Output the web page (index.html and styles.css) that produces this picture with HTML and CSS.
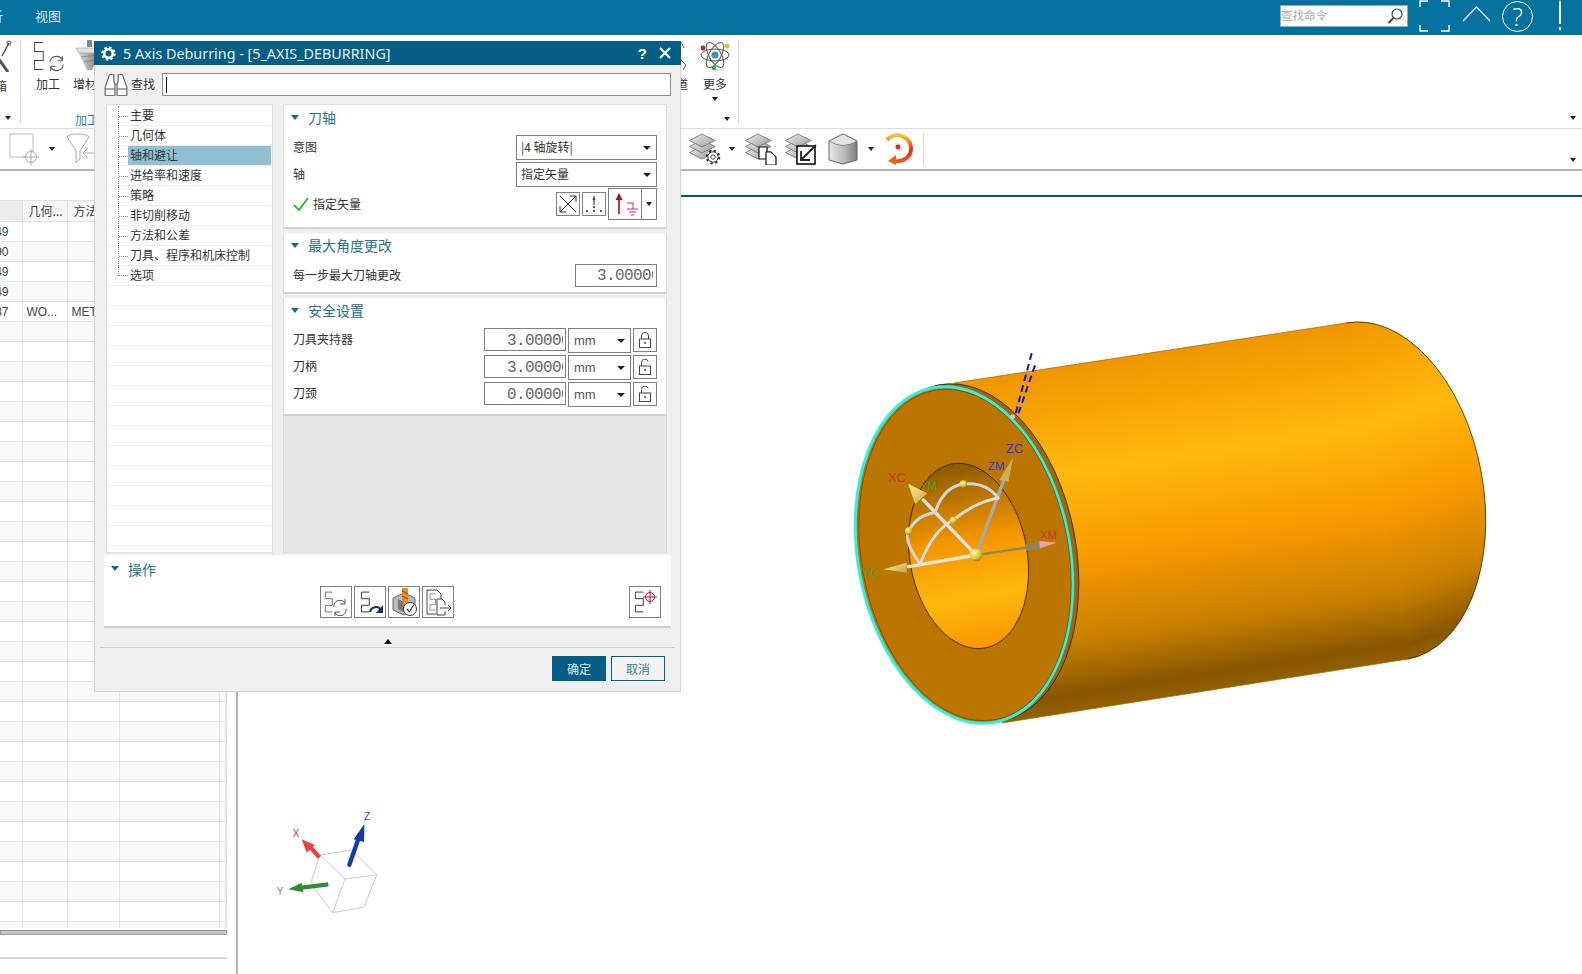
FILE: index.html
```html
<!DOCTYPE html>
<html lang="zh-CN">
<head>
<meta charset="utf-8">
<title>5 Axis Deburring</title>
<link rel="stylesheet" href="styles.css">
</head>
<body>
<svg class="defs" width="0" height="0" aria-hidden="true">
  <defs>
    <linearGradient id="layerFill" x1="0" y1="0" x2="1" y2="1"><stop offset="0" stop-color="#f2f2f2"/><stop offset="1" stop-color="#9a9a9a"/></linearGradient>
    <linearGradient id="cylFill" x1="0" y1="0" x2="1" y2="0"><stop offset="0" stop-color="#e8e8e8"/><stop offset=".5" stop-color="#bdbdbd"/><stop offset="1" stop-color="#7d7d7d"/></linearGradient>
    <linearGradient id="spinFill" x1="0" y1="0" x2="0" y2="1"><stop offset="0" stop-color="#f5c52a"/><stop offset=".55" stop-color="#e2301e"/><stop offset="1" stop-color="#e85a1c"/></linearGradient>
    <linearGradient id="drillFill" x1="0" y1="0" x2="1" y2="0"><stop offset="0" stop-color="#e6e6e6"/><stop offset=".6" stop-color="#9c9c9c"/><stop offset="1" stop-color="#777"/></linearGradient>
    <symbol id="meander" viewBox="0 0 14 30" preserveAspectRatio="none"><path d="M13 1.5H2V10.5H13V19.5H2V28.5H13" fill="none" stroke="currentColor" stroke-width="1.2"/></symbol>
    <symbol id="layers" viewBox="0 0 32 32">
      <path d="M13 13 26 19.5 13 26 0.5 19.5Z" fill="url(#layerFill)" stroke="#666" stroke-width=".8"/>
      <path d="M13 7 26 13.5 13 20 0.5 13.5Z" fill="url(#layerFill)" stroke="#666" stroke-width=".8"/>
      <path d="M13 1 26 7.5 13 14 0.5 7.5Z" fill="url(#layerFill)" stroke="#666" stroke-width=".8"/>
    </symbol>
    <symbol id="lock-closed" viewBox="0 0 16 18"><path d="M4.5 8V5a3.5 3.5 0 0 1 7 0V8" fill="none" stroke="#444"/><rect x="2.5" y="8" width="11" height="8.5" fill="#fff" stroke="#444"/><circle cx="8" cy="12" r="1" fill="#444"/></symbol>
    <symbol id="lock-open" viewBox="0 0 16 18"><path d="M4.5 8V4.5a3.5 3.5 0 0 1 6.8-1" fill="none" stroke="#444"/><rect x="2.5" y="8" width="11" height="8.5" fill="#fff" stroke="#444"/><circle cx="8" cy="12" r="1" fill="#444"/></symbol>
  </defs>
</svg>

<div class="app">
  <header class="topbar">
    <span class="menu menu-clipped">析</span>
    <span class="menu">视图</span>
    <div class="top-right">
      <div class="cmd-search">
        <span class="cmd-hint">查找命令</span>
        <svg class="cmd-glass" viewBox="0 0 18 18" width="18" height="18"><circle cx="11" cy="7" r="5" fill="none" stroke="#444" stroke-width="1.2"/><path d="M7.5 11 2.5 16" stroke="#444" stroke-width="2"/></svg>
      </div>
      <svg class="win-frame" viewBox="0 0 31 32" width="31" height="32"><path d="M1 7V1H9M22 1H30V7M1 25V31H9M22 31H30V25" fill="none" stroke="#fff" stroke-width="1.4"/></svg>
      <svg class="win-up" viewBox="0 0 29 16" width="29" height="16"><path d="M1 15 14.5 1 28 15" fill="none" stroke="#fff" stroke-width="1.2"/></svg>
      <div class="win-help">?</div>
      <div class="win-bang"><span class="bang-bar"></span><span class="bang-dot"></span></div>
    </div>
  </header>

  <section class="ribbon">
    <div class="rb-clip">
      <div class="rb-clip-icon">
        <svg viewBox="0 0 12 32" width="12" height="32"><path d="M-2 18 8 32" stroke="#555" stroke-width="3" fill="none"/><path d="M2 16 9 3" stroke="#555" stroke-width="1.5" fill="none"/><circle cx="9" cy="3" r="2" fill="none" stroke="#555"/></svg>
      </div>
      <span class="rb-clip-text">箱</span>
      <span class="caret caret-clip"></span>
    </div>
    <div class="rb-group">
      <div class="rb-tools">
        <div class="tool tool-mill">
          <div class="tool-icon">
            <svg class="ink" width="11" height="30"><use href="#meander" width="11" height="30"/></svg>
            <svg class="spin" viewBox="0 0 20 20" width="19" height="19"><path d="M3 9A7 7 0 0 1 16 6M17 11A7 7 0 0 1 4 14" fill="none" stroke="#555" stroke-width="1.1"/><path d="M16 2V7H11M4 18V13H9" fill="none" stroke="#555" stroke-width="1.1"/></svg>
          </div>
          <span class="tool-label">加工</span>
        </div>
        <div class="tool tool-add">
          <div class="tool-icon">
            <svg class="drill" viewBox="0 0 30 32" width="30" height="32"><rect x="12" y="0" width="5" height="7" fill="#888"/><path d="M1 8H28L17 30H12Z" fill="url(#drillFill)"/><path d="M1 8H28L25 13H4Z" fill="#e4e4e4" stroke="#999" stroke-width=".6"/><path d="M6 17 23 15M9 22 20 20" stroke="#777" stroke-width=".7"/></svg>
          </div>
          <span class="tool-label">增材</span>
        </div>
        <div class="tool tool-road">
          <div class="tool-icon">
            <svg viewBox="0 0 8 32" width="8" height="32"><path d="M1 2 4 8M1 20 6 25 3 30" fill="none" stroke="#555"/></svg>
          </div>
          <span class="tool-label">道</span>
        </div>
        <div class="tool tool-more">
          <div class="tool-icon">
            <svg viewBox="0 0 30 32" width="30" height="32">
              <g fill="none" stroke="#555" stroke-width="1"><ellipse cx="15" cy="15" rx="14" ry="6"/><ellipse cx="15" cy="15" rx="14" ry="6" transform="rotate(60 15 15)"/><ellipse cx="15" cy="15" rx="14" ry="6" transform="rotate(120 15 15)"/></g>
              <circle cx="15" cy="15" r="3.6" fill="#3e93b5"/>
              <circle cx="3" cy="8" r="2.4" fill="#b4262c"/><circle cx="27" cy="6" r="2.4" fill="#efb02a"/><circle cx="14" cy="28" r="2.4" fill="#2fae4a"/>
            </svg>
          </div>
          <span class="tool-label">更多</span>
          <span class="caret caret-more"></span>
        </div>
      </div>
      <div class="rb-foot"><span class="rb-name">加工</span><span class="caret"></span></div>
    </div>
    <div class="rb-end"><span class="caret"></span></div>
  </section>

  <section class="toolbar">
    <div class="tb-left">
      <svg class="tb-select" viewBox="0 0 32 32" width="32" height="32"><rect x="1" y="1" width="23" height="23" fill="#fff" stroke="#bbb"/><circle cx="22" cy="24" r="5.5" fill="#fff" stroke="#aaa"/><path d="M22 16V32M14 24H30" stroke="#aaa"/></svg>
      <span class="caret caret-select"></span>
      <svg class="tb-funnel" viewBox="0 0 30 32" width="30" height="32"><ellipse cx="12" cy="4" rx="11" ry="3" fill="#fff" stroke="#aaa"/><path d="M1 4 10 18V30L14 26V18L23 4" fill="#fff" stroke="#aaa"/><path d="M30 20H17M22 15 17 20 22 25" fill="none" stroke="#aaa"/></svg>
    </div>
    <svg class="tb-a" viewBox="0 0 32 32" width="32" height="32"><use href="#layers" width="32" height="32"/><circle cx="24" cy="24" r="6" fill="#fff" stroke="#333" stroke-width="2.6" stroke-dasharray="2.2 2.5"/><circle cx="24" cy="24" r="5.2" fill="#fff" stroke="#333" stroke-width=".9"/><circle cx="24" cy="24" r="2.2" fill="#fff" stroke="#333" stroke-width=".9"/></svg>
    <span class="caret caret-a"></span>
    <svg class="tb-b" viewBox="0 0 32 32" width="32" height="32"><use href="#layers" width="32" height="32"/><path d="M14 14H22V26H14Z" fill="#fff" stroke="#111" stroke-width="1.2"/><path d="M21 19H26L31 24V32H21Z" fill="#fff" stroke="#111" stroke-width="1.2"/></svg>
    <svg class="tb-c" viewBox="0 0 32 32" width="32" height="32"><use href="#layers" width="32" height="32"/><rect x="12" y="13" width="18" height="18" fill="#fff" stroke="#111" stroke-width="1.6"/><path d="M16 18V27H25M17 26 31 12" fill="none" stroke="#222" stroke-width="1.8"/></svg>
    <svg class="tb-d" viewBox="0 0 30 32" width="30" height="32"><path d="M15 1 29 8V27L15 31 1 27V8Z" fill="url(#cylFill)" stroke="#666"/><path d="M1 8Q15 17 29 8L15 1Z" fill="#e2e2e2" stroke="#777" stroke-width=".8"/></svg>
    <span class="caret caret-d"></span>
    <svg class="tb-e" viewBox="0 0 28 32" width="28" height="32"><path d="M2 7C8 -1 24 1 26 14 27 24 18 29 10 28" fill="none" stroke="url(#spinFill)" stroke-width="3.8"/><path d="M11 22 3 28 11 32Z" fill="#e8661c"/><circle cx="13" cy="14" r="2.4" fill="#d01818"/><path d="M9 14H17M13 10V18" stroke="#e06060" stroke-width=".6"/></svg>
    <span class="tb-sep"></span>
    <span class="caret caret-end"></span>
  </section>

  <main class="workspace">
    <aside class="navigator">
      <div class="grid-wrap">
        <table class="grid">
          <thead><tr><th></th><th>几何...</th><th>方法</th><th></th><th></th></tr></thead>
          <tbody>
            <tr><td>49</td><td></td><td></td><td></td><td></td></tr>
            <tr><td>90</td><td></td><td></td><td></td><td></td></tr>
            <tr><td>49</td><td></td><td></td><td></td><td></td></tr>
            <tr><td>49</td><td></td><td></td><td></td><td></td></tr>
            <tr><td>37</td><td>WO...</td><td>MET</td><td></td><td></td></tr>
            <tr><td></td><td></td><td></td><td></td><td></td></tr>
            <tr><td></td><td></td><td></td><td></td><td></td></tr>
            <tr><td></td><td></td><td></td><td></td><td></td></tr>
            <tr><td></td><td></td><td></td><td></td><td></td></tr>
            <tr><td></td><td></td><td></td><td></td><td></td></tr>
            <tr><td></td><td></td><td></td><td></td><td></td></tr>
            <tr><td></td><td></td><td></td><td></td><td></td></tr>
            <tr><td></td><td></td><td></td><td></td><td></td></tr>
            <tr><td></td><td></td><td></td><td></td><td></td></tr>
            <tr><td></td><td></td><td></td><td></td><td></td></tr>
            <tr><td></td><td></td><td></td><td></td><td></td></tr>
            <tr><td></td><td></td><td></td><td></td><td></td></tr>
            <tr><td></td><td></td><td></td><td></td><td></td></tr>
            <tr><td></td><td></td><td></td><td></td><td></td></tr>
            <tr><td></td><td></td><td></td><td></td><td></td></tr>
            <tr><td></td><td></td><td></td><td></td><td></td></tr>
            <tr><td></td><td></td><td></td><td></td><td></td></tr>
            <tr><td></td><td></td><td></td><td></td><td></td></tr>
            <tr><td></td><td></td><td></td><td></td><td></td></tr>
            <tr><td></td><td></td><td></td><td></td><td></td></tr>
            <tr><td></td><td></td><td></td><td></td><td></td></tr>
            <tr><td></td><td></td><td></td><td></td><td></td></tr>
            <tr><td></td><td></td><td></td><td></td><td></td></tr>
            <tr><td></td><td></td><td></td><td></td><td></td></tr>
            <tr><td></td><td></td><td></td><td></td><td></td></tr>
            <tr><td></td><td></td><td></td><td></td><td></td></tr>
            <tr><td></td><td></td><td></td><td></td><td></td></tr>
            <tr><td></td><td></td><td></td><td></td><td></td></tr>
            <tr><td></td><td></td><td></td><td></td><td></td></tr>
            <tr><td></td><td></td><td></td><td></td><td></td></tr>
            <tr><td></td><td></td><td></td><td></td><td></td></tr>
          </tbody>
        </table>
      </div>
      <div class="nav-scroll"></div>
      <div class="nav-rule"></div>
    </aside>
    <div class="divider"></div>
    <div class="graphics">
      <svg class="scene" viewBox="238 197 1344 777" width="1344" height="777">
        <defs>
          <linearGradient id="bodyFill" gradientUnits="userSpaceOnUse" x1="954" y1="383" x2="1006" y2="722">
            <stop offset="0" stop-color="#f09600"/><stop offset=".31" stop-color="#ffb90d"/><stop offset=".57" stop-color="#f89800"/><stop offset=".8" stop-color="#c87f00"/><stop offset=".95" stop-color="#875600"/><stop offset="1" stop-color="#936000"/>
          </linearGradient>
          <linearGradient id="holeFill" x1="0" y1="0" x2="0" y2="1">
            <stop offset="0" stop-color="#8a5800"/><stop offset=".18" stop-color="#b87400"/><stop offset=".42" stop-color="#f59600"/><stop offset=".72" stop-color="#ffb80c"/><stop offset="1" stop-color="#f79800"/>
          </linearGradient>
          <linearGradient id="coneFill" x1="0" y1="0" x2="1" y2="1"><stop offset="0" stop-color="#fff3a0"/><stop offset="1" stop-color="#c9a33a"/></linearGradient>
          <radialGradient id="ballFill" cx=".35" cy=".3" r=".8"><stop offset="0" stop-color="#fff6a8"/><stop offset=".6" stop-color="#e3c337"/><stop offset="1" stop-color="#8d7612"/></radialGradient>
        </defs>
        <ellipse cx="1377" cy="491" rx="106" ry="171" transform="rotate(-10.5 1377 491)" fill="url(#bodyFill)"/>
        <polygon points="954,383 1346,323 1408,659 1002,723 970,600" fill="url(#bodyFill)"/>
        <path d="M1346 323A105.4 170 -10.5 0 1 1408 659" fill="none" stroke="#3a2800" stroke-width=".8"/>
        <path d="M954 383 1346 323M1002 723 1408 659" stroke="#a86d00" stroke-width=".8"/>
        <ellipse cx="970" cy="553" rx="106" ry="171" transform="rotate(-10.5 970 553)" fill="#a06800" stroke="#222" stroke-width=".8"/>
        <ellipse cx="964" cy="555" rx="106" ry="170" transform="rotate(-10.5 964 555)" fill="#bb7600" stroke="#2df0e6" stroke-width="3"/>
        <ellipse cx="965" cy="555" rx="103.5" ry="167.5" transform="rotate(-10.5 965 555)" fill="none" stroke="#5e3c00" stroke-width=".6"/>
        <ellipse cx="968.5" cy="556" rx="58.7" ry="93.5" transform="rotate(-10 968.5 556)" fill="url(#holeFill)" stroke="#2a1b00" stroke-width=".8"/>
        <g transform="translate(840 340) scale(.33333)">
          <g fill="none" stroke="#1212cf" stroke-width="6" stroke-dasharray="20 13">
            <path d="M575 40 525 228"/><path d="M585 76 532 230"/>
          </g>
          <circle cx="518" cy="230" r="7" fill="#f3c4b0"/>
          <g fill="none" stroke-linecap="round">
            <path d="M408 645 565 622" stroke="#8f8566" stroke-width="7"/>
            <path d="M408 645 205 680" stroke="#e8e4da" stroke-width="10"/>
            <path d="M408 645 490 425" stroke="#a9a9a9" stroke-width="10"/>
            <path d="M408 645 250 480" stroke="#e6e6e6" stroke-width="10"/>
            <path d="M240 672Q190 600 206 573 230 525 285 518" stroke="#d5d5d5" stroke-width="9"/>
            <path d="M285 518Q310 440 370 432 440 425 475 475" stroke="#d5d5d5" stroke-width="9"/>
            <path d="M240 672Q280 570 340 540 400 490 470 475" stroke="#dddddd" stroke-width="9"/>
          </g>
          <polygon points="558,612 606,603 606,625 558,633" fill="#8c8460"/>
          <polygon points="650,608 598,603 600,625" fill="#f0a0a8"/>
          <polygon points="130,688 200,668 200,698" fill="url(#coneFill)"/>
          <polygon points="520,352 478,420 505,425" fill="#c9b15c"/>
          <polygon points="205,432 225,492 262,460" fill="url(#coneFill)"/>
          <circle cx="408" cy="645" r="19" fill="url(#ballFill)"/>
          <circle cx="370" cy="432" r="11" fill="url(#ballFill)"/>
          <circle cx="340" cy="541" r="11" fill="url(#ballFill)"/>
          <circle cx="206" cy="573" r="11" fill="url(#ballFill)"/>
          <text class="g-lab g-red" x="143" y="425">XC</text>
          <text class="g-lab g-blue" x="497" y="339">ZC</text>
          <text class="g-lab g-sm g-blue" x="444" y="389">ZM</text>
          <text class="g-lab g-sm g-green" x="240" y="450">YM</text>
          <text class="g-lab g-green" x="65" y="711">YC</text>
          <text class="g-lab g-sm g-red" x="600" y="597">XM</text>
        </g>
        <g transform="translate(0 780) scale(.33333)">
          <path d="M960 225 1055 210 1130 285 1035 297ZM1035 297 998 398 1092 382 1130 285M998 398 932 310 960 225" fill="#fff" stroke="#bdbdbd" stroke-width="2.4"/>
          <path d="M958 232 930 200" stroke="#e2453d" stroke-width="13"/>
          <polygon points="905,178 945,195 920,218" fill="#e2453d"/>
          <path d="M1048 254 1074 180" stroke="#0b3db3" stroke-width="13" stroke-linecap="round"/>
          <polygon points="1093,132 1061,178 1092,186" fill="#0b3db3"/>
          <path d="M985 313 905 323" stroke="#2f8f2f" stroke-width="13"/>
          <polygon points="865,328 905,308 910,337" fill="#2f8f2f"/>
          <text class="t-lab g-red" x="878" y="172">X</text>
          <text class="t-lab g-blue" x="1092" y="120">Z</text>
          <text class="t-lab g-green" x="830" y="344">Y</text>
        </g>
      </svg>
    </div>
  </main>

  <div class="dialog">
    <div class="dlg-title">
      <svg class="dlg-gear" viewBox="0 0 16 16" width="15" height="15"><circle cx="8" cy="8" r="4.6" fill="none" stroke="#fff" stroke-width="2.8"/><circle cx="8" cy="8" r="6.4" fill="none" stroke="#fff" stroke-width="2.4" stroke-dasharray="2.6 2.4"/></svg>
      <span class="dlg-name">5 Axis Deburring - [5_AXIS_DEBURRING]</span>
      <span class="dlg-q">?</span>
      <svg class="dlg-x" viewBox="0 0 12 12" width="12" height="12"><path d="M1 1 11 11M11 1 1 11" stroke="#fff" stroke-width="2"/></svg>
    </div>
    <div class="dlg-search">
      <svg class="binoc" viewBox="0 0 24 30" width="26" height="24" preserveAspectRatio="none"><path d="M6 2H10V10L11 14V28H2V18ZM18 2H14V10L13 14V28H22V18Z" fill="#fff" stroke="#555"/><path d="M2 20H11M13 20H22M11 14H13" stroke="#555"/></svg>
      <span class="find-label">查找</span>
      <div class="find-input"><span class="find-cursor"></span></div>
    </div>
    <div class="dlg-body">
      <ul class="tree">
        <li class="node"><span class="branch"></span><span class="node-text">主要</span></li>
        <li class="node"><span class="branch"></span><span class="node-text">几何体</span></li>
        <li class="node"><span class="branch"></span><span class="node-text node-on">轴和避让</span></li>
        <li class="node"><span class="branch"></span><span class="node-text">进给率和速度</span></li>
        <li class="node"><span class="branch"></span><span class="node-text">策略</span></li>
        <li class="node"><span class="branch"></span><span class="node-text">非切削移动</span></li>
        <li class="node"><span class="branch"></span><span class="node-text">方法和公差</span></li>
        <li class="node"><span class="branch"></span><span class="node-text">刀具、程序和机床控制</span></li>
        <li class="node node-last"><span class="branch"></span><span class="node-text">选项</span></li>
        <li class="node"></li><li class="node"></li><li class="node"></li><li class="node"></li><li class="node"></li>
        <li class="node"></li><li class="node"></li><li class="node"></li><li class="node"></li><li class="node"></li>
        <li class="node"></li><li class="node"></li><li class="node"></li>
      </ul>
      <div class="pages">
        <section class="panel panel-axis">
          <h3 class="sec"><span class="tri"></span>刀轴</h3>
          <div class="row row-sel row-first">
            <span class="lab">意图</span>
            <div class="select sel-wide"><span>|4 轴旋转|</span><span class="drop"></span></div>
          </div>
          <div class="row row-sel">
            <span class="lab">轴</span>
            <div class="select sel-wide"><span>指定矢量</span><span class="drop"></span></div>
          </div>
          <div class="row row-vec">
            <svg class="tick" viewBox="0 0 16 16" width="16" height="16"><path d="M1 9 6 14 15 2" fill="none" stroke="#2dbb3d" stroke-width="2"/></svg>
            <span class="lab">指定矢量</span>
            <div class="vec-tools">
              <div class="ibtn ibtn-sm"><svg viewBox="0 0 22 22" width="22" height="22"><path d="M3 3 19 19M19 3 3 19" stroke="#333"/><path d="M19 3H13M19 3V9M3 19H9M3 19V13" fill="none" stroke="#333"/></svg></div>
              <div class="ibtn ibtn-sm"><svg viewBox="0 0 22 22" width="22" height="22"><path d="M11 5V12" stroke="#444" stroke-width="1.2"/><path d="M11 2 12.5 7H9.5Z" fill="#444"/><path d="M3 18H5M10 18H12M17 18H19M10 14H12" stroke="#222" stroke-width="1.4"/></svg></div>
              <div class="vec-combo">
                <div class="vec-main"><svg viewBox="0 0 30 30" width="30" height="30"><path d="M9 9V25" stroke="#a50d12" stroke-width="1.6"/><path d="M9 4 12.5 11H5.5Z" fill="#b40d12"/><path d="M17 14H23V20M17 20H28M19 23H26M21 26H24" fill="none" stroke="#b520b5"/></svg></div>
                <div class="vec-drop"><span class="caret"></span></div>
              </div>
            </div>
          </div>
        </section>
        <section class="panel panel-angle">
          <h3 class="sec"><span class="tri"></span>最大角度更改</h3>
          <div class="row row-num">
            <span class="lab">每一步最大刀轴更改</span>
            <div class="num num-solo"><span class="num-val">3.00000</span></div>
          </div>
        </section>
        <section class="panel panel-safe">
          <h3 class="sec"><span class="tri"></span>安全设置</h3>
          <div class="row row-safe row-first">
            <span class="lab">刀具夹持器</span>
            <div class="num"><span class="num-val">3.00000</span></div>
            <div class="select sel-unit"><span>mm</span><span class="drop"></span></div>
            <div class="lock"><svg width="16" height="18"><use href="#lock-closed"/></svg></div>
          </div>
          <div class="row row-safe">
            <span class="lab">刀柄</span>
            <div class="num"><span class="num-val">3.00000</span></div>
            <div class="select sel-unit"><span>mm</span><span class="drop"></span></div>
            <div class="lock"><svg width="16" height="18"><use href="#lock-open"/></svg></div>
          </div>
          <div class="row row-safe">
            <span class="lab">刀颈</span>
            <div class="num"><span class="num-val">0.00000</span></div>
            <div class="select sel-unit"><span>mm</span><span class="drop"></span></div>
            <div class="lock"><svg width="16" height="18"><use href="#lock-open"/></svg></div>
          </div>
        </section>
        <div class="page-fill"></div>
      </div>
    </div>
    <section class="ops">
      <h3 class="sec sec-ops"><span class="tri"></span>操作</h3>
      <div class="ops-row">
        <div class="ops-mid">
          <div class="ibtn ibtn-op"><svg viewBox="0 0 30 30" width="30" height="30"><svg class="ink-g" x="3" y="4" width="9" height="22"><use href="#meander" width="9" height="22"/></svg><path d="M13 20A6 6 0 0 1 24 16M25 22A6 6 0 0 1 14 26" fill="none" stroke="#555"/><path d="M24 12V17H19M14 29V25H19" fill="none" stroke="#555"/></svg></div>
          <div class="ibtn ibtn-op"><svg viewBox="0 0 30 30" width="30" height="30"><svg class="ink-k" x="5" y="4" width="10" height="22"><use href="#meander" width="10" height="22"/></svg><path d="M15 25A6 6 0 0 1 26 23" fill="none" stroke="#1b2a5c" stroke-width="2"/><path d="M28 18V26H21Z" fill="#1b2a5c"/></svg></div>
          <div class="ibtn ibtn-op"><svg viewBox="0 0 30 30" width="30" height="30"><path d="M4 11 15 6 26 11V23L15 28 4 23Z" fill="#b9b9b9" stroke="#666"/><path d="M9 12 15 15V25L9 22Z" fill="#777"/><path d="M13 1H19V15L16 20 13 15Z" fill="#e98a2b"/><path d="M13 4 19 7M13 9 19 12" stroke="#8a4c10"/><circle cx="21" cy="22" r="6.5" fill="#fff" stroke="#333"/><path d="M18 22 20.5 25 24.5 18" fill="none" stroke="#333" stroke-width="1.2"/></svg></div>
          <div class="ibtn ibtn-op"><svg viewBox="0 0 30 30" width="30" height="30"><path d="M4 3H14L18 7V12M4 3V27H13" fill="none" stroke="#444"/><svg class="ink-g" x="6" y="6" width="7" height="18"><use href="#meander" width="7" height="18"/></svg><path d="M14 12H19L22 15V18M14 12V28H22V24M17 21H28M25 18 28 21 25 24" fill="none" stroke="#444"/></svg></div>
        </div>
        <div class="ibtn ibtn-op"><svg viewBox="0 0 30 30" width="30" height="30"><svg class="ink-k" x="4" y="4" width="10" height="22"><use href="#meander" width="10" height="22"/></svg><circle cx="20" cy="10" r="4.5" fill="none" stroke="#c01020"/><path d="M20 3V17M13 10H27" stroke="#c01020"/></svg></div>
      </div>
    </section>
    <div class="collapse"><span class="collapse-tri"></span></div>
    <div class="dlg-foot">
      <button class="btn btn-ok" type="button">确定</button>
      <button class="btn btn-cancel" type="button">取消</button>
    </div>
  </div>
</div>
</body>
</html>
```

FILE: styles.css
```css
* { box-sizing: border-box; }
html, body { margin: 0; padding: 0; }
body {
  width: 1582px; height: 974px; overflow: hidden; background: #fff; color: #333;
  font: 12px/1.2 "Noto Sans CJK SC", "Noto Sans", sans-serif;
}
.defs { position: absolute; }
.app { position: relative; width: 1582px; height: 974px; display: flex; flex-direction: column; overflow: hidden; }

.caret { display: inline-block; width: 0; height: 0; border-left: 3.5px solid transparent; border-right: 3.5px solid transparent; border-top: 4px solid #222; }

/* top bar */
.topbar { height: 35px; flex: none; background: #04719e; display: flex; align-items: center; color: #d7e8f0; padding-bottom: 3px; }
.menu { font-size: 13px; }
.menu-clipped { margin-left: -10px; margin-right: 32px; }
.top-right { margin-left: auto; display: flex; align-items: center; padding-right: 20px; }
.cmd-search { width: 128px; height: 22px; background: #fff; border: 1px solid #9aa7ad; display: flex; align-items: center; justify-content: space-between; padding-right: 3px; }
.cmd-hint { color: #aaa; font-size: 11.5px; }
.win-frame { margin-left: 11px; }
.win-up { margin-left: 12px; margin-bottom: 4px; }
.win-help { width: 31px; height: 31px; margin-left: 11px; border: 1px solid #fff; border-radius: 50%; color: #fff; text-align: center; font: 300 25px/28px "Open Sans", sans-serif; }
.win-bang { width: 4px; height: 31px; margin-left: 25px; display: flex; flex-direction: column; align-items: center; gap: 3px; }
.bang-bar { width: 2px; height: 23px; background: #fff; }
.bang-dot { width: 2px; height: 3px; background: #fff; }

/* ribbon */
.ribbon { height: 94px; flex: none; border-bottom: 1px solid #dcdcdc; display: flex; padding-top: 5px; }
.rb-clip { width: 21px; height: 84px; border-right: 1px solid #dadada; overflow: hidden; display: flex; flex-direction: column; position: relative; }
.rb-clip-icon { height: 32px; }
.rb-clip-text { margin: 5px 0 0 -5px; font-size: 12px; line-height: 17px; white-space: nowrap; }
.caret-clip { margin: 22px 0 0 5px; }
.rb-group { width: 718px; height: 84px; border-right: 1px solid #dadada; display: flex; flex-direction: column; }
.rb-tools { height: 71px; flex: none; display: flex; align-items: flex-start; }
.tool { display: flex; flex-direction: column; align-items: center; }
.tool-icon { height: 32px; display: flex; align-items: flex-start; }
.tool-label { margin-top: 3px; line-height: 17px; white-space: nowrap; }
.tool-mill { width: 36px; margin-left: 9px; }
.ink { color: #444; flex: none; margin: 1px 0 0 2px; }
.spin { margin: 14px 0 0 3px; flex: none; }
.tool-add { width: 30px; margin-left: 4px; }
.drill { margin-left: 9px; flex: none; }
.tool-road { width: 14px; margin-left: 574px; align-items: flex-end; }
.tool-more { width: 30px; margin-left: 12px; }
.caret-more { margin-top: 5px; }
.rb-foot { flex: 1; min-height: 0; display: flex; align-items: center; padding: 0 8px 0 54px; justify-content: space-between; }
.rb-name { color: #2b7ea4; line-height: 17px; margin-top: 3px; white-space: nowrap; }
.rb-foot .caret { margin-top: 2px; }
.rb-end { flex: 1; display: flex; justify-content: flex-end; align-items: flex-end; padding: 0 6px 8px 0; }

/* toolbar */
.toolbar { height: 42px; flex: none; border-bottom: 2px solid #b4b4b4; display: flex; align-items: center; }
.tb-left { width: 689px; display: flex; align-items: center; }
.tb-select { margin-left: 9px; }
.caret-select { margin-left: 8px; }
.tb-funnel { margin-left: 11px; }
.caret-a { margin-left: 8px; }
.tb-b { margin-left: 10px; }
.tb-c { margin-left: 8px; }
.tb-d { margin-left: 11px; }
.caret-d { margin-left: 10px; }
.tb-e { margin-left: 11px; }
.tb-sep { width: 1px; height: 32px; background: #dadada; margin-left: 10px; }
.caret-end { margin-left: auto; margin-right: 6px; margin-top: 22px; }

/* workspace */
.workspace { flex: 1; display: flex; min-height: 0; }
.navigator { width: 236px; flex: none; padding-top: 29px; display: flex; flex-direction: column; }
.grid-wrap { width: 227px; height: 728px; overflow: hidden; border-right: 1px solid #dedede; }
.grid { width: 226px; border-collapse: collapse; table-layout: fixed; font: 12px/1 "Liberation Sans", "Noto Sans CJK SC", sans-serif; color: #444; }
.grid th:nth-child(1), .grid td:nth-child(1) { width: 22px; }
.grid th:nth-child(2), .grid td:nth-child(2) { width: 45px; }
.grid th:nth-child(3), .grid td:nth-child(3) { width: 52px; }
.grid th:nth-child(4), .grid td:nth-child(4) { width: 100px; }
.grid th { height: 21px; padding: 0 0 0 6px; font-weight: normal; text-align: left; background: #f6f6f6; border-top: 1px solid #e2e2e2; border-right: 1px solid #e2e2e2; border-bottom: 1px solid #e2e2e2; overflow: hidden; white-space: nowrap; font-family: "Noto Sans CJK SC", sans-serif; }
.grid th:first-child { background: #ececec; }
.grid td { height: 20px; padding: 0 0 0 4px; border-right: 1px solid #e6e6e6; border-bottom: 1px solid #e6e6e6; white-space: nowrap; overflow: hidden; }
.grid td:first-child { padding: 0 13px 0 0; text-align: right; direction: rtl; }
.grid tbody tr:nth-child(even) td { background: #f9f9f9; }
.nav-scroll { width: 227px; height: 5px; margin-top: 2px; background: #c4c4c4; border: 1px solid #9c9c9c; }
.nav-rule { width: 227px; height: 2px; margin-top: 22px; background: #d4d4d4; }
.divider { width: 2px; flex: none; background: #b0b0b0; }
.graphics { flex: 1; padding-top: 24px; min-width: 0; }
.graphics::before { content: ""; display: block; height: 2px; background: #07567a; }
.scene { display: block; }
.g-lab { font: 40px "Liberation Sans", sans-serif; }
.g-sm { font-size: 34px; }
.t-lab { font: 30px "Liberation Sans", sans-serif; }
.g-red { fill: #c0392b; }
.g-blue { fill: #3535dd; }
.g-green { fill: #5c9a3a; }

/* dialog */
.dialog { position: absolute; left: 94px; top: 41px; width: 587px; height: 651px; background: #efefef; border: 1px solid #d4d4d4; border-top: 0; display: flex; flex-direction: column; }
.dlg-title { height: 24px; flex: none; margin: 0 -1px; background: #045e86; color: #fff; display: flex; align-items: center; padding: 0 10px 0 7px; }
.dlg-name { margin-left: 7px; font: 14.35px "Noto Sans", sans-serif; color: #e8f1f5; white-space: nowrap; }
.dlg-q { margin-left: auto; font: bold 15px "Liberation Sans", sans-serif; color: #fff; }
.dlg-x { margin-left: 12px; }
.dlg-search { height: 23px; margin: 8px 9px 0 8px; display: flex; align-items: center; flex: none; }
.binoc { flex: none; }
.find-label { margin-left: 2px; width: 31px; font-size: 12px; white-space: nowrap; }
.find-input { flex: 1; height: 23px; background: #fff; border: 1px solid #8e8e8e; display: flex; align-items: center; padding-left: 3px; }
.find-cursor { width: 1px; height: 16px; background: #111; }
.dlg-body { height: 449px; margin: 8px 0 0 11px; display: flex; flex: none; }
.tree { width: 167px; height: 449px; margin: 0; padding: 1px 1px 0 1px; list-style: none; background: #fff; border: 1px solid #dcdcdc; overflow: hidden; flex: none; }
.node { height: 20px; display: flex; align-items: stretch; border-bottom: 1px solid #ececec; }
.branch { width: 10px; margin-left: 10px; flex: none; border-left: 1px dotted #8a8a8a; display: flex; align-items: center; margin-bottom: -1px; }
.branch::after { content: ""; width: 9px; border-top: 1px dotted #8a8a8a; }
.node-last .branch { height: 10px; margin-bottom: 0; align-items: flex-end; }
.node-text { flex: 1; padding-left: 2px; line-height: 18px; white-space: nowrap; font-size: 12px; color: #333; }
.node-on { background: #8fc1d2; }
.pages { width: 384px; margin-left: 10px; display: flex; flex-direction: column; gap: 4px; flex: none; height: 449px; }
.panel { background: #fff; border-bottom: 2px solid #d2d2d2; border-right: 1px solid #dedede; border-left: 1px solid #dedede; padding: 0 9px 0 9px; flex: none; }
.panel-axis { height: 125px; border-top: 1px solid #dedede; }
.panel-angle { height: 61px; }
.panel-safe { height: 118px; }
.sec { margin: 0; height: 26px; padding-bottom: 2px; display: flex; align-items: center; font-size: 14px; font-weight: normal; color: #2a6f8f; line-height: 1; }
.tri { width: 0; height: 0; margin: 0 9px 0 -2px; border-left: 4.5px solid transparent; border-right: 4.5px solid transparent; border-top: 5px solid #0f6c92; }
.row { display: flex; align-items: center; }
.lab { font-size: 12px; color: #333; white-space: nowrap; }
.row-sel { height: 25px; margin-top: 2px; justify-content: space-between; }
.row-sel.row-first { margin-top: 4px; }
.select { height: 25px; border: 1px solid #7f7f7f; background: #fff; display: flex; align-items: center; justify-content: space-between; padding: 0 5px 0 4px; white-space: nowrap; }
.sel-wide { width: 141px; }
.sel-unit { width: 63px; font: 13px "Liberation Sans", sans-serif; color: #555; padding-left: 5px; margin-left: 2px; flex: none; }
.drop { width: 0; height: 0; border-left: 4px solid transparent; border-right: 4px solid transparent; border-top: 4.5px solid #222; }
.row-vec { height: 32px; margin-top: 1px; }
.tick { margin-right: 4px; flex: none; }
.vec-tools { margin-left: auto; display: flex; align-items: center; gap: 2px; }
.ibtn { border: 1px solid #7f7f7f; background: #fff; display: flex; align-items: center; justify-content: center; flex: none; }
.ibtn-sm { width: 24px; height: 24px; }
.vec-combo { width: 49px; height: 32px; border: 1px solid #7f7f7f; display: flex; }
.vec-main { width: 32px; display: flex; align-items: center; justify-content: center; }
.vec-drop { flex: 1; border-left: 1px solid #7f7f7f; display: flex; align-items: center; justify-content: center; }
.row-num { height: 23px; margin-top: 5px; justify-content: space-between; }
.num { width: 82px; height: 23px; border: 1px solid #7f7f7f; background: #fff; padding-left: 22px; font: 16px/24px "Liberation Mono", monospace; letter-spacing: -.6px; color: #666; flex: none; }
.num-solo { padding-left: 21px; line-height: 23px; }
.num-val { display: block; width: 56px; overflow: hidden; white-space: nowrap; }
.row-safe { height: 25px; margin-top: 2px; align-items: flex-start; }
.row-safe.row-first { margin-top: 4px; }
.row-safe .lab { margin-right: auto; line-height: 22px; }
.lock { width: 24px; height: 24px; margin-left: 2px; border: 1px solid #7f7f7f; display: flex; align-items: center; justify-content: center; flex: none; }
.page-fill { flex: 1; margin-top: -4px; background: #e8e8e8; border: 1px solid #dcdcdc; border-top: 0; }
.ops { height: 73px; margin: 2px 9px 0 9px; background: #fff; border-bottom: 2px solid #cfcfcf; padding: 0 10px 0 7px; flex: none; }
.sec-ops { height: 31px; padding-bottom: 4px; }
.sec-ops .tri { margin: 0 9px 0 0; }
.ops-row { display: flex; justify-content: space-between; }
.ops-mid { display: flex; gap: 2px; margin-left: 209px; }
.ibtn-op { width: 32px; height: 32px; }
.ink-g { color: #555; }
.ink-k { color: #222; }
.collapse { height: 20px; flex: none; display: flex; align-items: flex-end; justify-content: center; margin: 0 5px; padding-bottom: 3px; border-bottom: 1px solid #cfcfcf; }
.collapse-tri { width: 0; height: 0; margin-left: 1px; border-left: 4.5px solid transparent; border-right: 4.5px solid transparent; border-bottom: 5px solid #111; }
.dlg-foot { display: flex; justify-content: flex-end; gap: 5px; padding: 8px 15px 0 0; }
.btn { width: 54px; height: 25px; padding: 0; font: 12px "Noto Sans CJK SC", sans-serif; border: 1px solid #045e86; }
.btn-ok { background: #045e86; color: #d6e8f0; }
.btn-cancel { background: #f2f2f2; color: #3d7f9e; }
```
